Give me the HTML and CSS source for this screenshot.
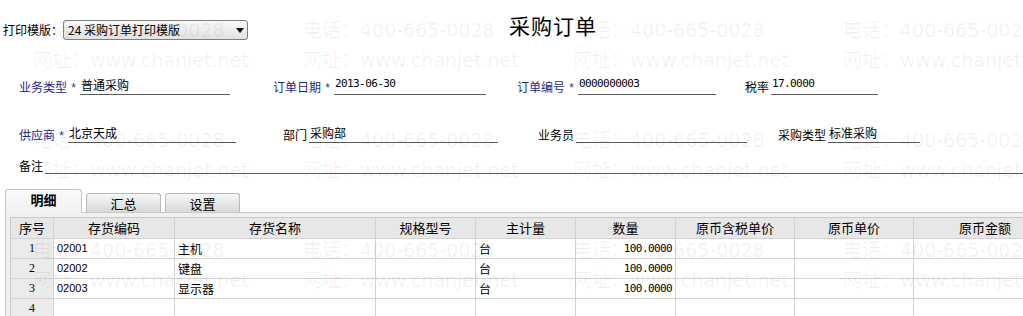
FILE: index.html
```html
<!DOCTYPE html>
<html lang="zh-CN">
<head>
  <meta charset="UTF-8">
  <title>采购订单</title>
  <link rel="stylesheet" href="styles.css">
</head>
<body>

  <div class="top">
    <span class="print-label">打印模版：</span>
    <div class="select">
      <span>24 采购订单打印模版</span>
      <svg width="8" height="5" viewBox="0 0 8 5"><path d="M0 0h8L4 5z" fill="#000"/></svg>
    </div>
    <h1 class="title">采购订单</h1>
  </div>

  <div class="row row-1">
    <div class="field f-type"><span class="label req">业务类型</span><span class="star">*</span><span class="val">普通采购</span></div>
    <div class="field f-date"><span class="label req">订单日期</span><span class="star">*</span><span class="val num">2013-06-30</span></div>
    <div class="field f-no"><span class="label req">订单编号</span><span class="star">*</span><span class="val num">0000000003</span></div>
    <div class="field f-tax"><span class="label">税率</span><span class="val num">17.0000</span></div>
  </div>

  <div class="row row-2">
    <div class="field f-vendor"><span class="label req">供应商</span><span class="star">*</span><span class="val">北京天成</span></div>
    <div class="field f-dept"><span class="label">部门</span><span class="val">采购部</span></div>
    <div class="field f-clerk"><span class="label">业务员</span><span class="val"></span></div>
    <div class="field f-ptype"><span class="label">采购类型</span><span class="val">标准采购</span></div>
  </div>

  <div class="row row-3">
    <div class="field f-memo"><span class="label">备注</span><span class="val"></span></div>
  </div>

  <div class="tabs">
    <div class="tab active">明细</div>
    <div class="tab">汇总</div>
    <div class="tab">设置</div>
  </div>

  <div class="panel">
    <table class="grid">
      <colgroup>
        <col class="c-seq"><col class="c-code"><col class="c-name"><col class="c-spec"><col class="c-unit">
        <col class="c-qty"><col class="c-taxprice"><col class="c-price"><col class="c-amount">
      </colgroup>
      <thead>
        <tr>
          <th>序号</th><th>存货编码</th><th>存货名称</th><th>规格型号</th><th>主计量</th>
          <th>数量</th><th>原币含税单价</th><th>原币单价</th><th class="right">原币金额</th>
        </tr>
      </thead>
      <tbody>
        <tr>
          <td class="seq">1</td><td class="code">02001</td><td>主机</td><td></td><td>台</td>
          <td class="qty">100.0000</td><td></td><td></td><td></td>
        </tr>
        <tr>
          <td class="seq">2</td><td class="code">02002</td><td>键盘</td><td></td><td>台</td>
          <td class="qty">100.0000</td><td></td><td></td><td></td>
        </tr>
        <tr>
          <td class="seq">3</td><td class="code">02003</td><td>显示器</td><td></td><td>台</td>
          <td class="qty">100.0000</td><td></td><td></td><td></td>
        </tr>
        <tr>
          <td class="seq">4</td><td class="code"></td><td></td><td></td><td></td>
          <td class="qty"></td><td></td><td></td><td></td>
        </tr>
      </tbody>
    </table>
  </div>

  <!-- watermark laid over the whole form -->
  <div class="watermark">
    <div class="wm">电话：400-665-0028<br>网址：www.chanjet.net</div>
    <div class="wm">电话：400-665-0028<br>网址：www.chanjet.net</div>
    <div class="wm">电话：400-665-0028<br>网址：www.chanjet.net</div>
    <div class="wm">电话：400-665-0028<br>网址：www.chanjet.net</div>
    <div class="wm">电话：400-665-0028<br>网址：www.chanjet.net</div>
    <div class="wm">电话：400-665-0028<br>网址：www.chanjet.net</div>
    <div class="wm">电话：400-665-0028<br>网址：www.chanjet.net</div>
    <div class="wm">电话：400-665-0028<br>网址：www.chanjet.net</div>
    <div class="wm">电话：400-665-0028<br>网址：www.chanjet.net</div>
    <div class="wm">电话：400-665-0028<br>网址：www.chanjet.net</div>
    <div class="wm">电话：400-665-0028<br>网址：www.chanjet.net</div>
    <div class="wm">电话：400-665-0028<br>网址：www.chanjet.net</div>
  </div>

</body>
</html>
```

FILE: styles.css
```css
* { box-sizing: border-box; }

body {
  margin: 0;
  width: 1023px;
  height: 316px;
  overflow: hidden;
  position: relative;
  background: #fff;
  color: #000;
  font: 12px "Noto Sans CJK SC", sans-serif;
}

/* Header: template picker + title */
.top {
  display: flex;
  align-items: flex-start;
  height: 48px;
  padding: 15px 0 0 3px;
}
.print-label {
  margin-top: 5px;
  line-height: 20px;
}
.select {
  margin-top: 5px;
  width: 185px;
  height: 20px;
  padding: 0 3px 0 4px;
  display: flex;
  align-items: center;
  justify-content: space-between;
  border: 1px solid #7f7f7f;
  border-radius: 3px;
  background: linear-gradient(#f8f8f8, #e2e2e2);
  line-height: 18px;
}
.title {
  margin: 0 0 0 261px;
  font-size: 21px;
  font-weight: normal;
  line-height: 20px;
  letter-spacing: 1px;
}

/* Form rows */
.row {
  display: grid;
  align-items: end;
  height: 20px;
  padding-left: 19px;
}
.row-1 { grid-template-columns: 254px 244px 228px auto; margin-top: 27px; }
.row-2 { grid-template-columns: 264px 255px 240px auto; margin-top: 28px; }
.row-3 { grid-template-columns: 1fr; margin-top: 11px; }

.field {
  display: flex;
  align-items: flex-end;
}
.label {
  line-height: 17px;
  white-space: nowrap;
}
.label.req { color: #1b2a8c; }
.star {
  width: 13px;
  text-align: center;
  color: #2a3a8c;
  font: 12px "Liberation Sans", sans-serif;
  line-height: 13px;
}
.val {
  height: 18px;
  line-height: 16px;
  padding-left: 1px;
  border-bottom: 1px solid #5a5a5a;
  white-space: nowrap;
}
.label + .val { margin-left: 2px; }
.num {
  font-family: "DejaVu Sans Mono", monospace;
  font-size: 11px;
  letter-spacing: -0.6px;
  line-height: 14px;
}

.f-type .val   { width: 150px; }
.f-date .val   { width: 152px; }
.f-no .val     { width: 138px; }
.f-tax .val    { width: 107px; }
.f-vendor .val { width: 168px; }
.f-dept .val   { width: 189px; }
.f-clerk .val  { width: 171px; }
.f-ptype .val  { width: 92px; }
.f-memo .val   { flex: 1; }

/* Tabs */
.tabs {
  display: flex;
  align-items: flex-end;
  gap: 4px;
  height: 23px;
  margin-top: 15px;
  padding-left: 5px;
}
.tab {
  width: 75px;
  height: 19px;
  border: 1px solid #b9b9b9;
  border-bottom: none;
  border-radius: 3px 3px 0 0;
  background: linear-gradient(#f6f6f6, #d9d9d9);
  text-align: center;
  font-size: 13px;
  line-height: 19px;
}
.tab.active {
  width: 77px;
  height: 24px;
  margin-bottom: -1px;
  position: relative;
  z-index: 1;
  border-color: #c4c4c4;
  background: linear-gradient(#fbfbfb, #f1f1f1);
  font-weight: bold;
  line-height: 20px;
}

/* Detail grid */
.panel {
  height: 110px;
  margin-left: 5px;
  padding: 4px 0 0 4px;
  border: 1px solid #c8c8c8;
  border-right: none;
  background: #f0f0f0;
  overflow: hidden;
}
.grid {
  width: 1052px;
  table-layout: fixed;
  border-collapse: separate;
  border-spacing: 0;
  border-top: 1px solid #c9c9c9;
  border-left: 1px solid #c9c9c9;
  background: #fff;
}
.c-seq { width: 43px; }
.c-code { width: 121px; }
.c-name { width: 201px; }
.c-spec { width: 100px; }
.c-unit { width: 100px; }
.c-qty { width: 100px; }
.c-taxprice { width: 119px; }
.c-price { width: 119px; }
.c-amount { width: 149px; }

.grid th,
.grid td {
  padding: 0 3px;
  border-right: 1px solid #d3d3d3;
  border-bottom: 1px solid #d3d3d3;
  white-space: nowrap;
  overflow: hidden;
}
.grid th {
  background: #e7e7e7;
  font-weight: normal;
  font-size: 13px;
  line-height: 20px;
}
.grid th.right { text-align: right; padding-right: 51px; }
.grid td {
  height: 20px;
  line-height: 19px;
  font-size: 12px;
}
.grid td.seq {
  background: #ebebeb;
  text-align: center;
  font-family: "Liberation Serif", serif;
}
.grid td.code {
  font-family: "Liberation Sans", sans-serif;
  font-size: 11px;
}
.grid td.qty {
  text-align: right;
  font-family: "DejaVu Sans Mono", monospace;
  font-size: 11px;
  letter-spacing: -0.6px;
}

/* Watermark overlay */
.watermark {
  position: absolute;
  top: 0;
  left: 0;
  width: 1080px;
  height: 330px;
  display: flex;
  flex-wrap: wrap;
  pointer-events: none;
  color: rgba(0, 0, 0, 0.06);
  font: 19px "DejaVu Sans", "Noto Sans CJK SC", sans-serif;
}
.wm {
  width: 270px;
  height: 110px;
  padding: 15px 0 0 33px;
  line-height: 30px;
  white-space: nowrap;
}
```
